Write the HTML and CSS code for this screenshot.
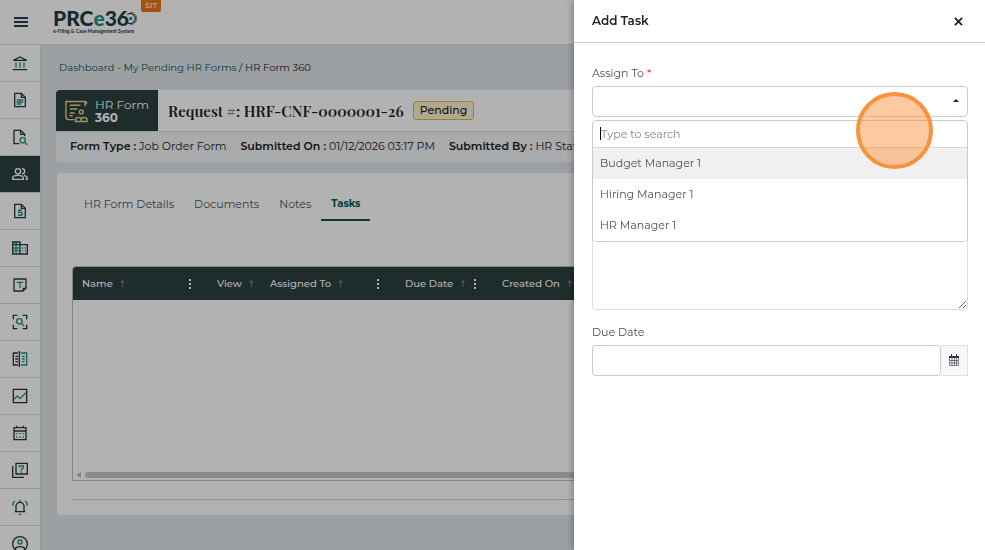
FILE: index.html
```html
<!DOCTYPE html>
<html lang="en">
<head>
	<meta charset="UTF-8">
	<title>HR Form 360 - Add Task</title>
	<link rel="stylesheet" href="styles.css">
</head>
<body>
	<header class="topbar">
		<button class="menu-btn" type="button" aria-label="Menu"><span></span><span></span><span></span></button>
		<a class="logo" href="#">
			<span class="logo-name">PRC<b>e</b>36<svg viewBox="0 0 24 24"><circle class="t fill" cx="10" cy="12" r="2"/><path d="M4 5a8.500 8.500 0 1 1 0 14"/><path class="thin" d="M9 1a11 11 0 1 1 0 22"/></svg></span>
			<span class="logo-tag">e-Filing &amp; Case Management System</span>
		</a>
		<span class="env">SIT</span>
	</header>

	<div class="layout">
		<nav class="sidebar">
			<a href="#" aria-label="Court"><svg viewBox="0 0 24 24"><path d="M1 22h22M2 8h20L12 3zM5 8h14"/><path class="t" d="M6 11v8M12 11v8M18 11v8"/></svg></a>
			<a href="#" aria-label="Forms"><svg viewBox="0 0 24 24"><path d="M14 2H4v20h16V8zM14 2v6h6"/><path class="t" d="M7 12h10M7 15h10M7 18h7"/></svg></a>
			<a href="#" aria-label="Search forms"><svg viewBox="0 0 24 24"><path d="M11 22H3V2h10l6 6v3M13 2v6h6"/><circle class="t" cx="16" cy="17" r="4"/><path class="t" d="m19 20 4 4"/></svg></a>
			<a class="active" href="#" aria-label="People"><svg viewBox="0 0 24 24"><circle cx="9" cy="8" r="4"/><path d="M1 20v-2c0-3 4-4 8-4s8 1 8 4v2zM15 4a4 4 0 0 1 0 8M18 14c3 1 5 2 5 4v2h-3"/></svg></a>
			<a href="#" aria-label="Finance"><svg viewBox="0 0 24 24"><path d="M14 2H4v20h16V8zM14 2v6h6"/><path class="t" d="M15 11h-5v3h5v4H9M12 9v2M12 18v2"/></svg></a>
			<a href="#" aria-label="Organizations"><svg viewBox="0 0 24 24"><path d="M12 7V3H1v18h22V7zM12 7v14M1 7h11M6 3v4"/><path class="t" d="M6 7v14M1 12h11M1 16h11M15 12h2M19 12h2M15 16h2M19 16h2"/></svg></a>
			<a href="#" aria-label="Templates"><svg viewBox="0 0 24 24"><path d="M21 16V3H3v18h13z"/><path class="dark" d="M20 17h-3v3z"/><path class="t" d="M7 8h10M12 8v9"/></svg></a>
			<a href="#" aria-label="Scan"><svg viewBox="0 0 24 24"><path d="M2 8V2h6M16 2h6v6M22 16v6h-6M8 22H2v-6"/><circle class="t" cx="11" cy="11" r="4"/><path class="t" d="m14 14 4 4"/></svg></a>
			<a href="#" aria-label="Compare"><svg viewBox="0 0 24 24"><path d="M11 0v24M9 3H2v18h7M5 8h4M5 12h4M5 16h4"/><path class="t" d="M13 3h9v18h-9M15 8h4M15 12h4M15 16h4"/></svg></a>
			<a href="#" aria-label="Reports"><svg viewBox="0 0 24 24"><path d="M2 2h20v20H2z"/><path class="t" d="m3 17 5-5 4 4 9-9"/></svg></a>
			<a href="#" aria-label="Calendar"><svg viewBox="0 0 24 24"><path d="M3 4h18v18H3zM3 9h18M7 1v3M17 1v3"/><path class="t" d="M6 13h2M11 13h2M16 13h2M6 18h2M11 18h2M16 18h2"/></svg></a>
			<a href="#" aria-label="Help"><svg viewBox="0 0 24 24"><path d="M6 2h17v16H6zM1 6v17h17"/><path class="t" d="M11 8V6h6v3l-3 2v2M14 14v2"/></svg></a>
			<a href="#" aria-label="Notifications"><svg viewBox="0 0 24 24"><path d="M4 19h16M6 19v-8a6 6 0 0 1 12 0v8M12 2v3"/><path class="t" d="M1 10c0-3 1-5 3-7M23 10c0-3-1-5-3-7M10 23h4"/></svg></a>
			<a href="#" aria-label="Profile"><svg viewBox="0 0 24 24"><circle cx="12" cy="12" r="11"/><path d="M4 19c4-4 12-4 16 0"/><circle class="t" cx="12" cy="9" r="3"/></svg></a>
		</nav>

		<main class="content">
			<div class="breadcrumb"><a href="#">Dashboard - My Pending HR Forms</a> / HR Form 360</div>

			<section class="summary">
				<div class="summary-top">
					<div class="form-badge">
						<svg viewBox="0 0 24 24"><path d="M10 21H4a3 3 0 0 1-3-3V2h20v5M21 2c2 0 2 3 0 3M5 6h11M5 10h8M5 14h5M5 17h3"/><circle cx="17" cy="13" r="2"/><path d="M11 23v-2c0-3 6-3 6 0 0-3 6-3 6 0v2zM17 20v3"/></svg>
						<div>HR Form<strong>360</strong></div>
					</div>
					<h1>Request #: HRF-CNF-0000001-26</h1>
					<span class="status">Pending</span>
				</div>
				<div class="summary-meta">
					<span><b>Form Type :</b> Job Order Form</span>
					<span><b>Submitted On :</b> 01/12/2026 03:17 PM</span>
					<span><b>Submitted By :</b> HR Staff</span>
				</div>
			</section>

			<section class="card">
				<div class="tabs">
					<a href="#">HR Form Details</a>
					<a href="#">Documents</a>
					<a href="#">Notes</a>
					<a class="active" href="#">Tasks</a>
				</div>
				<div class="grid">
					<table>
						<colgroup><col class="col-wide"><col class="col-view"><col class="col-wide"><col class="col-date"><col></colgroup>
						<thead>
							<tr>
								<th><div>Name <i class="sort"></i><i class="dots"></i></div></th>
								<th><div>View <i class="sort"></i></div></th>
								<th><div>Assigned To <i class="sort"></i><i class="dots"></i></div></th>
								<th><div>Due Date <i class="sort"></i><i class="dots"></i></div></th>
								<th><div>Created On <i class="sort"></i></div></th>
							</tr>
						</thead>
					</table>
					<div class="scrollbar"><span class="scroll-left"></span><span class="scroll-thumb"></span></div>
				</div>
				<hr>
			</section>
		</main>
	</div>

	<div class="backdrop"></div>

	<aside class="drawer">
		<div class="drawer-header">
			<h2>Add Task</h2>
			<button class="close" type="button" aria-label="Close"><svg viewBox="0 0 10 10"><path d="m1 1 8 8M9 1 1 9"/></svg></button>
		</div>
		<form class="drawer-body">
			<div class="field">
				<label for="assign">Assign To <em>*</em></label>
				<div class="select">
					<select id="assign"><option value=""></option></select>
					<div class="dropdown">
						<div class="search"><input type="text" placeholder="Type to search" aria-label="Type to search"></div>
						<button class="option active" type="button">Budget Manager 1</button>
						<button class="option" type="button">Hiring Manager 1</button>
						<button class="option" type="button">HR Manager 1</button>
					</div>
					<span class="click-mark"></span>
				</div>
			</div>
			<textarea class="details" aria-label="Details"></textarea>
			<div class="field">
				<label for="due">Due Date</label>
				<div class="date">
					<input id="due" type="text">
					<button type="button" aria-label="Pick a date"><svg viewBox="0 0 12 12"><path class="solid" d="M1 2h10v2H1zM3 0h1v2H3zM8 0h1v2H8z"/><path class="grid-lines" d="M1.500 3v8.500h9V3M2 6.500h8M2 9h8M4 4v7M6.500 4v7M8.500 4v7"/></svg></button>
				</div>
			</div>
		</form>
	</aside>
</body>
</html>
```
FILE: styles.css
```css
* {
    box-sizing: border-box;
}

body {
    margin: 0;
    height: 100vh;
    overflow: hidden;
    display: flex;
    flex-direction: column;
    background: #e0e5ea;
    color: #222;
    font: 11px/16px Montserrat, Inter, sans-serif;
}

a {
    color: inherit;
    text-decoration: none;
}

button,
input,
select,
textarea {
    font: inherit;
    color: inherit;
    margin: 0;
}

svg {
    fill: none;
    stroke: currentColor;
    stroke-width: 2;
}

svg .t {
    stroke: #268f84;
}

svg .fill {
    fill: #268f84;
}

svg .dark {
    fill: currentColor;
}

svg .thin {
    stroke-width: 1;
}

/* top bar */
.topbar {
    flex: none;
    height: 45px;
    display: flex;
    align-items: flex-start;
    background: #fff;
    border-bottom: 1px solid #d5dbe0;
}

.menu-btn {
    display: flex;
    flex-direction: column;
    gap: 2px;
    padding: 17px 12px 0 14px;
    border: 0;
    background: none;
}

.menu-btn span {
    width: 14px;
    height: 2px;
    background: #2a3a55;
}

.logo {
    display: flex;
    flex-direction: column;
    margin: 8px 6px 0 12px;
    width: 83px;
    padding-left: 1px;
    font-family: Lato, sans-serif;
    color: #203c46;
}

.logo-name {
    display: flex;
    align-items: center;
    font-size: 21px;
    line-height: 20px;
    font-weight: 900;
}

.logo-name b {
    color: #268f84;
}

.logo-name svg {
    flex: none;
    width: 14px;
    height: 17px;
    margin-left: -4px;
}

.logo-tag {
    font-size: 5px;
    line-height: 6px;
    font-weight: 700;
    white-space: nowrap;
}

.env {
    height: 12px;
    padding: 0 4px;
    border-radius: 0 0 2px 2px;
    background: #f07512;
    color: #fff;
    font-size: 8px;
    line-height: 11px;
    font-weight: 500;
}

/* side menu */
.layout {
    flex: 1;
    min-height: 0;
    display: flex;
}

.sidebar {
    flex: none;
    width: 41px;
    overflow: hidden;
    background: #fff;
    border-right: 1px solid #d5dbe0;
}

.sidebar a {
    height: 37px;
    display: flex;
    align-items: center;
    justify-content: center;
    border-bottom: 1px solid #d5dbe0;
    color: #273a3d;
}

.sidebar svg {
    width: 16px;
    height: 16px;
}

.sidebar .active {
    background: #2d4040;
    color: #fff;
}

/* page content */
.content {
    flex: 1;
    min-width: 0;
    padding: 15px 16px 0 15px;
}

.breadcrumb {
    padding-left: 3px;
    margin-bottom: 14px;
    font-size: 10px;
}

.breadcrumb a {
    color: #005c50;
}

.summary {
    border-radius: 4px;
    overflow: hidden;
    background: #f2f4f6;
}

.summary-top {
    height: 42px;
    display: flex;
    align-items: center;
    background: #fff;
    border-bottom: 1px solid #dde1e4;
}

.form-badge {
    align-self: stretch;
    width: 102px;
    display: flex;
    align-items: center;
    gap: 7px;
    padding-left: 9px;
    background: #2d4040;
    color: #fff;
    font-size: 12px;
    line-height: 13px;
}

.form-badge svg {
    width: 23px;
    height: 24px;
    stroke-width: 1.5;
    color: #e9cf8c;
}

.form-badge strong {
    display: block;
}

h1 {
    margin: 0 9px 0 10px;
    font: 600 15px/20px "Playfair Display", "Liberation Serif", serif;
}

.status {
    padding: 0 6px;
    border: 1px solid #dcb949;
    border-radius: 3px;
    background: #fdf3cf;
    font-weight: 500;
    line-height: 17px;
}

.summary-meta {
    display: flex;
    gap: 14px;
    padding: 6px 14px 8px;
    white-space: nowrap;
}

.summary-meta b {
    font-weight: 600;
}

.card {
    margin: 11px 0 0 1px;
    padding: 21px 15px 15px;
    border-radius: 4px;
    background: #fff;
}

.tabs {
    display: flex;
    margin-bottom: 45px;
    padding-left: 2px;
    line-height: 20px;
}

.tabs a {
    padding: 0 10px 5px;
    border-bottom: 2px solid transparent;
    color: #4a5560;
}

.tabs .active {
    color: #005c50;
    font-size: 10px;
    font-weight: 700;
    border-color: #005c50;
}

.grid {
    height: 215px;
    display: flex;
    flex-direction: column;
    justify-content: space-between;
    border: 1px solid #bbc0c0;
    border-radius: 4px 4px 0 0;
    overflow: hidden;
}

table {
    width: 100%;
    table-layout: fixed;
    border-collapse: collapse;
}

.col-wide {
    width: 135px;
}

.col-view {
    width: 53px;
}

.col-date {
    width: 97px;
}

th {
    height: 33px;
    padding: 0 0 0 9px;
    background: #2d4040;
    color: #fff;
    font-size: 10px;
    font-weight: 500;
    text-align: left;
    white-space: nowrap;
}

th div {
    display: flex;
    align-items: center;
}

.sort {
    margin-left: 6px;
    color: #82908f;
    font: 9px/10px "DejaVu Sans", sans-serif;
}

.sort:before {
    content: '↑';
}

.dots {
    width: 2px;
    height: 10px;
    margin: 0 17px 0 auto;
    background: repeating-linear-gradient(#fff 0 2px, transparent 2px 4px);
}

.scrollbar {
    display: flex;
    align-items: center;
    gap: 4px;
    padding: 2px 3px;
}

.scroll-left {
    border: 3px solid transparent;
    border-right: 5px solid #bbb;
    border-left: 0;
}

.scroll-thumb {
    flex: 1;
    height: 6px;
    border-radius: 3px;
    background: #c8c8c8;
}

hr {
    margin: 18px 0 0;
    border: 0;
    border-top: 1px solid #d0d0d0;
}

/* add task drawer */
.backdrop {
    position: fixed;
    inset: 0;
    background: rgba(0, 0, 0, .3);
}

.drawer {
    position: fixed;
    top: 0;
    right: 0;
    bottom: 0;
    width: 411px;
    max-width: 100%;
    background: #fff;
    box-shadow: 0 0 8px rgba(0, 0, 0, .4);
}

.drawer-header {
    height: 43px;
    display: flex;
    align-items: center;
    justify-content: space-between;
    padding: 0 22px 0 18px;
    border-bottom: 1px solid #c8cccc;
}

h2 {
    margin: 0;
    font-size: 12px;
    font-weight: 600;
}

.close {
    display: flex;
    padding: 0;
    border: 0;
    background: none;
}

.close svg {
    width: 9px;
    height: 9px;
}

.drawer-body {
    padding: 22px 17px 22px 18px;
    color: #4a4f58;
}

.field label {
    display: block;
    margin-bottom: 5px;
}

.field em {
    color: #e02020;
    font-style: normal;
}

.select {
    position: relative;
}

.select:after {
    content: '';
    position: absolute;
    top: 13px;
    right: 9px;
    border: 3px solid transparent;
    border-top: 0;
    border-bottom-color: #222;
}

.select select {
    display: block;
    width: 100%;
    height: 31px;
    appearance: none;
    border: 1px solid #c5cecd;
    border-radius: 4px;
    background: #fff;
}

.dropdown {
    position: absolute;
    top: 34px;
    left: 0;
    right: 0;
    border: 1px solid #c5cecd;
    border-radius: 4px;
    overflow: hidden;
    background: #fff;
}

.search {
    padding: 6px 7px 7px;
    border-bottom: 1px solid #d5d9d9;
}

.search input {
    display: block;
    width: 100%;
    height: 13px;
    padding: 0;
    border: 0;
    border-left: 1px solid #000;
    outline: 0;
}

.search input::placeholder {
    color: #858585;
}

.option {
    display: block;
    width: 100%;
    height: 31px;
    padding: 0 7px 2px;
    border: 0;
    background: #fff;
    text-align: left;
}

.option.active {
    background: #f0f0f0;
}

.click-mark {
    position: absolute;
    top: 6px;
    right: 35px;
    width: 77px;
    height: 77px;
    border: 4px solid #f7933c;
    border-radius: 50%;
    background: rgba(249, 148, 66, .5);
}

.details {
    display: block;
    width: 100%;
    height: 91px;
    margin: 102px 0 14px;
    border: 1px solid #d8dede;
    border-radius: 4px;
}

.date {
    display: flex;
}

.date input {
    flex: 1;
    height: 31px;
    padding: 0 8px;
    border: 1px solid #c5cecd;
    border-radius: 3px;
}

.date button {
    width: 27px;
    display: flex;
    align-items: center;
    justify-content: center;
    padding: 0 0 2px;
    border: 1px solid #dde1e4;
    border-left: 0;
    background: #f7f8fa;
    color: #30343c;
}

.date svg {
    width: 12px;
    height: 12px;
    stroke: none;
}

.date .solid {
    fill: currentColor;
}

.date .grid-lines {
    stroke: currentColor;
    stroke-width: .6;
}
```
